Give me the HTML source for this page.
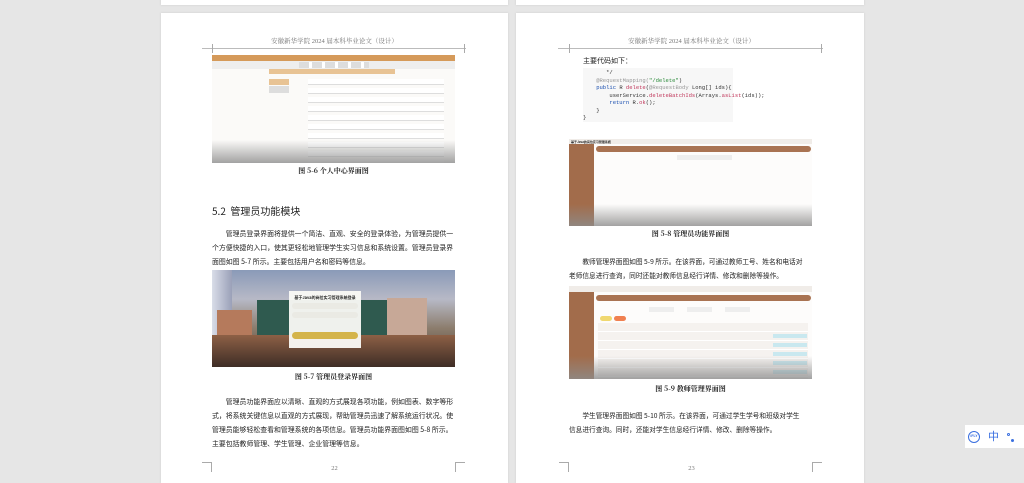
<!DOCTYPE html>
<html><head><meta charset="utf-8"><style>
*{margin:0;padding:0;box-sizing:border-box}
html,body{width:1024px;height:483px;overflow:hidden}
body{background:#e6e6e6;position:relative;font-family:"Liberation Serif","Noto Serif CJK SC","Noto Sans CJK SC",serif;color:#222}
.a{position:absolute}
.page{position:absolute;background:#fff;box-shadow:0 0 2px #ccc}
.hd{font-size:6.5px;color:#777;text-align:center;white-space:nowrap}
.p{font-size:6.9px;letter-spacing:0;line-height:14px;white-space:nowrap;color:#222;font-family:"Noto Sans CJK SC",sans-serif}
.cap{font-size:7px;font-weight:bold;text-align:center;white-space:nowrap;font-family:"Noto Serif CJK SC",serif}
.cm{position:absolute;border-color:#aaa;border-style:solid;width:10px;height:10px}
.fade{background:linear-gradient(to bottom,rgba(255,255,255,0) 0%,rgba(140,140,140,.8) 100%)}
.code{font-family:"Liberation Mono",monospace;font-size:5.5px;line-height:7.5px;white-space:pre;color:#333}
</style></head><body>
<div class="page" style="left:161px;top:-10px;width:347px;height:15px"></div>
<div class="page" style="left:516px;top:-10px;width:348px;height:15px"></div>

<div class="page" style="left:161px;top:13px;width:347px;height:470px"></div>
<div class="a hd" style="left:213px;top:36px;width:243px">安徽新华学院 2024 届本科毕业论文（设计）</div>
<div class="a" style="left:202px;top:48px;width:264px;border-top:1px solid #bbb"></div>
<div class="cm" style="left:212px;top:44px;border-width:0 0 0 1px;height:9px"></div>
<div class="cm" style="left:455px;top:44px;border-width:0 1px 0 0;height:9px"></div>
<div class="a" style="left:212px;top:55px;width:243px;height:108px;background:#fbfaf8;overflow:hidden">
 <div class="a" style="left:0;top:0;width:243px;height:6px;background:#d59a5a"></div>
 <div class="a" style="left:0;top:6px;width:243px;height:8px;background:#eee"></div>
 <div class="a" style="left:87px;top:7px;width:70px;height:6px;background:repeating-linear-gradient(90deg,#ddd 0 10px,#fff 10px 13px)"></div>
 <div class="a" style="left:57px;top:14px;width:126px;height:5px;background:#e8c394"></div>
 <div class="a" style="left:57px;top:24px;width:20px;height:6px;background:#e8c394"></div>
 <div class="a" style="left:57px;top:31px;width:20px;height:7px;background:#ddd"></div>
 <div class="a" style="left:96px;top:24px;width:136px;height:90px;background:repeating-linear-gradient(180deg,#fff 0 5px,#ddd 5px 6px,#fbfaf8 6px 9px)"></div>
 <div class="a fade" style="left:0;top:85px;width:243px;height:23px"></div>
</div>
<div class="a cap" style="left:212px;top:166px;width:243px">图 5-6 个人中心界面图</div>
<div class="a" style="left:212px;top:203px;font-size:10px;white-space:nowrap;font-family:'Noto Sans CJK SC',sans-serif;color:#222">5.2&nbsp; 管理员功能模块</div>
<div class="a p" style="left:212px;top:226px">&emsp;&emsp;管理员登录界面将提供一个简洁、直观、安全的登录体验，为管理员提供一<br>个方便快捷的入口，使其更轻松地管理学生实习信息和系统设置。管理员登录界<br>面图如图 5-7 所示。主要包括用户名和密码等信息。</div>
<div class="a" style="left:212px;top:270px;width:243px;height:97px;overflow:hidden;background:linear-gradient(180deg,#8a9ab8 0%,#b7b9c6 30%,#8c7d6d 60%,#4b3b33 100%)">
 <div class="a" style="left:0;top:0;width:20px;height:97px;background:linear-gradient(90deg,#d9dde8,#9aa0b8)"></div>
 <div class="a" style="left:45px;top:30px;width:150px;height:40px;background:#2f5a4f"></div>
 <div class="a" style="left:175px;top:28px;width:40px;height:50px;background:#c7a897"></div>
 <div class="a" style="left:5px;top:40px;width:35px;height:35px;background:#b57a5c"></div>
 <div class="a" style="left:0;top:65px;width:243px;height:32px;background:linear-gradient(180deg,#8d6046,#3e2d26)"></div>
 <div class="a" style="left:77px;top:21px;width:72px;height:57px;background:rgba(250,250,245,.95)"></div>
 <div class="a" style="left:80px;top:25px;width:66px;font-size:4px;text-align:center;font-weight:bold;font-family:'Noto Sans CJK SC',sans-serif">基于Java的岗位实习管理系统登录</div>
 <div class="a" style="left:80px;top:33px;width:66px;height:6px;background:#eaeae4;border-radius:3px"></div>
 <div class="a" style="left:80px;top:42px;width:66px;height:6px;background:#eaeae4;border-radius:3px"></div>
 <div class="a" style="left:80px;top:62px;width:66px;height:7px;background:#d4b44a;border-radius:4px"></div>
</div>
<div class="a cap" style="left:212px;top:372px;width:243px">图 5-7 管理员登录界面图</div>
<div class="a p" style="left:212px;top:394px">&emsp;&emsp;管理员功能界面应以清晰、直观的方式展现各项功能，例如图表、数字等形<br>式，将系统关键信息以直观的方式展现，帮助管理员迅速了解系统运行状况。使<br>管理员能够轻松查看和管理系统的各项信息。管理员功能界面图如图 5-8 所示。<br>主要包括教师管理、学生管理、企业管理等信息。</div>
<div class="a hd" style="left:213px;top:465px;width:243px">22</div>
<div class="cm" style="left:202px;top:462px;border-width:1px 1px 0 0"></div>
<div class="cm" style="left:455px;top:462px;border-width:1px 0 0 1px"></div>

<div class="page" style="left:516px;top:13px;width:348px;height:470px"></div>
<div class="a hd" style="left:570px;top:36px;width:243px">安徽新华学院 2024 届本科毕业论文（设计）</div>
<div class="a" style="left:558px;top:48px;width:265px;border-top:1px solid #bbb"></div>
<div class="cm" style="left:569px;top:44px;border-width:0 0 0 1px;height:9px"></div>
<div class="cm" style="left:812px;top:44px;border-width:0 1px 0 0;height:9px"></div>
<div class="a p" style="left:583px;top:54px;font-size:7px">主要代码如下：</div>
<div class="a code" style="left:583px;top:68px;width:150px;height:54px;background:#f7f7f7;padding:1px 0 0 0">       */
    <span style="color:#999">@RequestMapping(</span><span style="color:#2a8a3a">"/delete"</span>)
    <span style="color:#1a4fb0">public</span> R <span style="color:#c0365a">delete</span>(<span style="color:#999">@RequestBody</span> Long[] ids){
        userService.<span style="color:#c0365a">deleteBatchIds</span>(Arrays.<span style="color:#c0365a">asList</span>(ids));
        <span style="color:#1a4fb0">return</span> R.<span style="color:#c0365a">ok</span>();
    }
}</div>
<div class="a" style="left:569px;top:139px;width:243px;height:87px;background:#fdfcfb;overflow:hidden">
 <div class="a" style="left:0;top:0;width:243px;height:5px;background:#f0ece8"></div>
 <div class="a" style="left:2px;top:1px;font-size:3px;font-family:'Noto Sans CJK SC',sans-serif;font-weight:bold">基于Java的岗位实习管理系统</div>
 <div class="a" style="left:0;top:5px;width:25px;height:82px;background:#a26c4b"></div>
 <div class="a" style="left:27px;top:7px;width:215px;height:6px;background:#a97352;border-radius:3px"></div>
 <div class="a" style="left:108px;top:16px;width:55px;height:5px;background:#eee"></div>
 <div class="a fade" style="left:0;top:65px;width:243px;height:22px"></div>
</div>
<div class="a cap" style="left:569px;top:229px;width:243px">图 5-8 管理员功能界面图</div>
<div class="a p" style="left:569px;top:254px;font-size:6.7px">&emsp;&emsp;教师管理界面图如图 5-9 所示。在该界面，可通过教师工号、姓名和电话对<br>老师信息进行查询，同时还能对教师信息经行详情、修改和删除等操作。</div>
<div class="a" style="left:569px;top:286px;width:243px;height:93px;background:#fdfcfb;overflow:hidden">
 <div class="a" style="left:0;top:0;width:243px;height:6px;background:#f0ece8"></div>
 <div class="a" style="left:0;top:6px;width:25px;height:87px;background:#a26c4b"></div>
 <div class="a" style="left:27px;top:9px;width:215px;height:6px;background:#a97352;border-radius:3px"></div>
 <div class="a" style="left:80px;top:21px;width:110px;height:5px;background:repeating-linear-gradient(90deg,#eee 0 25px,#fdfcfb 25px 38px)"></div>
 <div class="a" style="left:31px;top:30px;width:12px;height:5px;background:#f0d870;border-radius:3px"></div>
 <div class="a" style="left:45px;top:30px;width:12px;height:5px;background:#f08050;border-radius:3px"></div>
 <div class="a" style="left:29px;top:37px;width:210px;height:56px;background:repeating-linear-gradient(180deg,#f5f2ef 0 8px,#fff 8px 9px)"></div>
 <div class="a" style="left:204px;top:46px;width:34px;height:47px;background:repeating-linear-gradient(180deg,transparent 0 2px,#c9e8ef 2px 6px,transparent 6px 9px)"></div>
 <div class="a fade" style="left:0;top:70px;width:243px;height:23px"></div>
</div>
<div class="a cap" style="left:569px;top:384px;width:243px">图 5-9 教师管理界面图</div>
<div class="a p" style="left:569px;top:408px;font-size:6.7px">&emsp;&emsp;学生管理界面图如图 5-10 所示。在该界面，可通过学生学号和班级对学生<br>信息进行查询。同时，还能对学生信息经行详情、修改、删除等操作。</div>
<div class="a hd" style="left:570px;top:465px;width:243px">23</div>
<div class="cm" style="left:559px;top:462px;border-width:1px 1px 0 0"></div>
<div class="cm" style="left:812px;top:462px;border-width:1px 0 0 1px"></div>

<div class="a" style="left:965px;top:425px;width:59px;height:23px;background:#fff"></div>
<div class="a" style="left:968px;top:431px;width:12px;height:12px;border:1.5px solid #3a6fe0;border-radius:50%;font-size:3.5px;color:#3a6fe0;text-align:center;line-height:9px;font-weight:bold;font-family:'Liberation Sans',sans-serif">iFLY</div>
<div class="a" style="left:988px;top:430px;font-size:11px;color:#3a6fe0;font-family:'Noto Sans CJK SC',sans-serif;line-height:13px">中</div>
<div class="a" style="left:1007px;top:433px;width:3px;height:3px;border:1px solid #3a6fe0;border-radius:50%"></div>
<div class="a" style="left:1011px;top:439px;width:3px;height:3px;background:#3a6fe0;border-radius:50%"></div>
</body></html>
